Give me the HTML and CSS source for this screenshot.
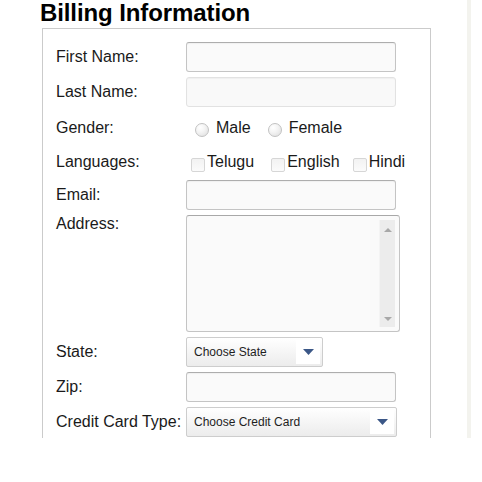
FILE: index.html
```
<!DOCTYPE html>
<html>
<head>
<meta charset="utf-8">
<link rel="stylesheet" href="styles.css">
</head>
<body>
<div class="page">
  <h1 class="title">Billing Information</h1>
  <fieldset class="box">
    <div class="row r30">
      <label class="lbl">First Name:</label>
      <input class="field" type="text">
    </div>
    <div class="row r30">
      <label class="lbl">Last Name:</label>
      <input class="field light" type="text">
    </div>
    <div class="row r31">
      <label class="lbl">Gender:</label>
      <div class="opts gender">
        <span class="radio"></span><span class="opt-text">Male</span>
        <span class="radio second"></span><span class="opt-text">Female</span>
      </div>
    </div>
    <div class="row r27">
      <label class="lbl">Languages:</label>
      <div class="opts langs">
        <span class="check"></span><span class="opt-text">Telugu</span>
        <span class="check c2"></span><span class="opt-text">English</span>
        <span class="check c3"></span><span class="opt-text">Hindi</span>
      </div>
    </div>
    <div class="row r30">
      <label class="lbl">Email:</label>
      <input class="field" type="text">
    </div>
    <div class="row raddr">
      <label class="lbl top">Address:</label>
      <div class="textarea">
        <div class="ta-body"></div>
        <div class="scrollbar">
          <span class="sb-up"></span>
          <span class="sb-down"></span>
        </div>
      </div>
    </div>
    <div class="row r30">
      <label class="lbl">State:</label>
      <div class="select state">
        <span class="sel-text">Choose State</span>
        <span class="sel-btn"><svg width="11" height="6" viewBox="0 0 11 6"><path d="M0 0H11L5.5 6Z" fill="#3b5787"/></svg></span>
      </div>
    </div>
    <div class="row r30">
      <label class="lbl">Zip:</label>
      <input class="field" type="text">
    </div>
    <div class="row r30">
      <label class="lbl">Credit Card Type:</label>
      <div class="select card">
        <span class="sel-text">Choose Credit Card</span>
        <span class="sel-btn"><svg width="11" height="6" viewBox="0 0 11 6"><path d="M0 0H11L5.5 6Z" fill="#3b5787"/></svg></span>
      </div>
    </div>
  </fieldset>
</div>
</body>
</html>
```
FILE: styles.css
```
html, body {
  margin: 0;
  padding: 0;
  background: #fff;
}
body {
  font-family: "Liberation Sans", Arial, sans-serif;
  color: #1a1a1a;
}
.page {
  width: 467px;
  height: 438px;
  overflow: hidden;
  border-right: 4px solid #f3f3ee;
  box-sizing: content-box;
}
.title {
  margin: 0 0 0 40px;
  height: 28px;
  font-size: 24px;
  line-height: 26px;
  font-weight: bold;
  color: #000;
  letter-spacing: -0.1px;
}
.box {
  margin: 0 0 0 42px;
  padding: 13px 0 20px 13px;
  width: 389px;
  box-sizing: border-box;
  border: 1px solid #cbcbcb;
  display: flex;
  flex-direction: column;
  gap: 5px;
  min-width: 0;
}
.row {
  display: flex;
  align-items: center;
}
.r30 { height: 30px; }
.r31 { height: 31px; }
.r27 { height: 27px; }
.raddr { height: 117px; align-items: flex-start; }
.lbl {
  width: 130px;
  flex: none;
  font-size: 16px;
  line-height: 18px;
}
.lbl.top { margin-top: 0; }
.field {
  width: 210px;
  height: 30px;
  box-sizing: border-box;
  margin: 0;
  border: 1px solid #c4c4c4;
  border-top-color: #adadad;
  border-radius: 3px;
  background: #fafafa;
  box-shadow: inset 0 1px 1px rgba(0,0,0,0.04);
  padding: 0 6px;
  font: 14px "Liberation Sans", Arial, sans-serif;
}
.field.light {
  border-color: #e2e2e2;
  background: #f9f9f9;
}
.opts {
  display: flex;
  align-items: center;
  font-size: 16px;
  line-height: 18px;
}
.radio {
  width: 14px;
  height: 14px;
  box-sizing: border-box;
  border-radius: 50%;
  border: 1px solid #c2c2c2;
  background: radial-gradient(circle at 35% 30%, #ffffff 0%, #f4f4f4 40%, #dcdcdc 100%);
  margin: 5px 7px 0 9px;
  flex: none;
}
.radio.second { margin-left: 17px; }
.check {
  width: 14px;
  height: 14px;
  box-sizing: border-box;
  border: 1px solid #d6d6d6;
  border-radius: 2px;
  background: linear-gradient(#f2f2f2, #fbfbfb);
  margin: 6px 2px 0 5px;
  flex: none;
}
.check.c2 { margin-left: 17px; }
.check.c3 { margin-left: 13px; }
.textarea {
  width: 214px;
  height: 117px;
  box-sizing: border-box;
  border: 1px solid #c4c4c4;
  border-top-color: #a8a8a8;
  border-radius: 3px;
  background: #fafafa;
  display: flex;
  padding: 4px 4px 4px 0;
}
.ta-body { flex: 1; }
.scrollbar {
  width: 16px;
  background: #ececec;
  border-left: 1px solid #f4f4f4;
  display: flex;
  flex-direction: column;
  justify-content: space-between;
  align-items: center;
  padding: 8px 0 6px;
  box-sizing: border-box;
}
.sb-up {
  width: 0;
  height: 0;
  border-left: 4px solid transparent;
  border-right: 4px solid transparent;
  border-bottom: 4px solid #a8a8a8;
}
.sb-down {
  width: 0;
  height: 0;
  border-left: 4px solid transparent;
  border-right: 4px solid transparent;
  border-top: 4px solid #a8a8a8;
}
.select {
  height: 30px;
  box-sizing: border-box;
  border: 1px solid #cdcdcd;
  border-radius: 2px;
  background: linear-gradient(#ffffff, #ececec);
  display: flex;
  align-items: center;
  padding: 2px;
  font-size: 12px;
  color: #1e1e1e;
}
.select.state { width: 137px; }
.select.card { width: 211px; }
.sel-text {
  flex: 1;
  padding-left: 5px;
}
.sel-btn {
  width: 24px;
  height: 100%;
  background: #fff;
  display: flex;
  align-items: center;
  justify-content: center;
}
```
